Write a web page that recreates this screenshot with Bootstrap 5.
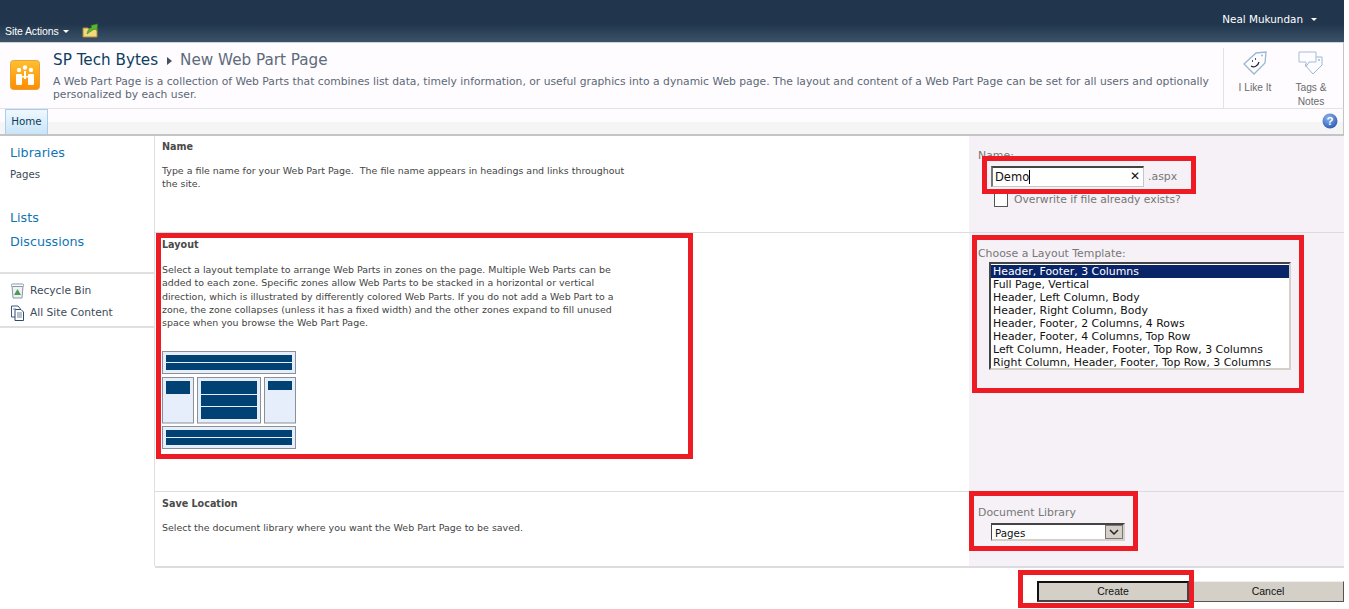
<!DOCTYPE html>
<html lang="en"><head><meta charset="utf-8"><title>New Web Part Page</title>
<link href="https://cdn.jsdelivr.net/npm/bootstrap@5.3.0/dist/css/bootstrap.min.css" rel="stylesheet">
<style>
html,body{height:609px;overflow:hidden}
body{font-family:"DejaVu Sans",sans-serif;font-size:9.45px;line-height:13.3px;color:#444;background:#fff;position:relative}
.sp-page{width:1344px;height:609px}
.sp-top{height:42px;background:linear-gradient(#21364d 0,#21364d 24px,#3b5269 100%);color:#fff;padding:0 27px 0 5px}
.sp-top .site{font-family:"Liberation Sans",sans-serif;font-size:10.5px;letter-spacing:-.1px;margin-top:24px;line-height:14px}
.sp-top .user{font-size:10.4px;margin-top:12px;line-height:14px}
.caret-d{display:inline-block;border:3px solid transparent;border-top-color:#fff;border-bottom:0;vertical-align:2px;margin-left:4px}
.sp-title{height:67px;border-top:1px solid #cfd3d8;border-bottom:1px solid #e4e2e6;background:#fefcff;border-right:1px solid #c4c4c4}
.sp-logo{margin:17px 13px 0 10px;width:30px;height:30px;flex:none}
.sp-head{padding-top:8px;flex:1;min-width:0}
.sp-crumb{font-size:15.2px;line-height:19px;color:#5d6b7a;white-space:nowrap}
.sp-crumb b{font-weight:400;color:#0d3e5f}
.sp-crumb i{display:inline-block;border:4px solid transparent;border-left:5px solid #44525f;border-right:0;margin:0 8px 0 9px;vertical-align:0}
.sp-desc{color:#5c6875;font-size:10.76px;line-height:13px;margin-top:5px;width:1165px}
.sp-social{width:120px;border-left:1px solid #e1e1e6;margin:5px 0 0;flex:none;color:#6a6a6a;font-size:10.2px;line-height:14px;text-align:center;font-family:"Liberation Sans",sans-serif;padding-left:8px}
.sp-social>div{width:46px}
.sp-social>div+div{margin-left:11px;width:44px}
.sp-social svg{display:block;margin:0 auto 5px}
.sp-ribbon{height:27px;background:linear-gradient(#fefcff 0,#fefcff 13px,#f5f5f5 13px);border-bottom:2px solid #c4c4c4;border-right:1px solid #c4c4c4;position:relative}
.sp-tab{margin-left:5px;width:43px;height:25px;background:linear-gradient(#f0f8fd,#c9e5f8);border:1px solid #a4cdee;border-bottom:0;color:#0d3e5f;font-size:10.3px;line-height:22px;text-align:center}
.sp-help{position:absolute;right:5px;top:4px}
.sp-main{height:430px}
.sp-left{width:155px;flex:none;border-right:1px solid #e0e0e0;padding-top:9px}
.sp-left .hd{color:#0f75b5;font-size:12.7px;line-height:15px;padding-left:10px}
.sp-left .sb{color:#3c4a58;font-size:10.2px;line-height:14px;padding-left:10px}
.sp-tools{border-top:2px solid #e0e0e0;border-bottom:2px solid #e0e0e0;margin-top:23px;padding:6px 0 7px 10px;height:56px;width:154px;color:#3c4a58;font-size:10.65px}
.sp-tools .it{height:22px;align-items:center;gap:5px}
.sec{border-bottom:1px solid #dcdce0}
.sec-l{width:814px;flex:none;padding:4px 0 0 7px}
.sec-l h6{font-family:inherit;font-size:9.6px;line-height:14px;font-weight:700;color:#4a4a4a;margin:0}
.sec-l p{margin:10px 0 0}
.sec-r{width:375px;background:#f5f1f6;padding-left:9px;color:#777;font-size:10.9px;position:relative}
.lbl{display:block;line-height:14px;margin:0}
.nm{margin-left:13px;width:153px;height:21px;background:#fff;border:1px solid #c6c6c6;border-top:2px solid #444;border-left:2px solid #777;color:#111;font-size:11.5px;line-height:18px;padding-left:2px;position:relative}
.cur{display:inline-block;width:1px;height:14px;background:#000;vertical-align:-3px}
.xx{position:absolute;right:3px;top:-1px;font-size:12px}
.chk{width:14px;height:14px;border:1px solid #555;background:#fff;margin:0;flex:none;border-radius:0;display:block}
.ovr{font-size:10.75px}
.tpl{margin:1px 0 0 11px;width:302px;height:108px;background:#fff;border:2px solid;border-color:#444 #d4d0c8 #d4d0c8 #444;color:#111;font-size:10.9px;line-height:13px;padding-top:1px}
.tpl div{padding-left:2px;height:13px;white-space:nowrap;line-height:13px}
.tpl .sel{background:#0a246a;color:#fff;height:13px}
.doc{margin:3px 0 0 13px;width:134px;height:18px;background:#fff;border:1px solid;border-color:#444 #d4d0c8 #d4d0c8 #444;color:#111;font-size:10.3px;line-height:16px;padding-left:3px;position:relative;border-width:2px 2px 2px 1px}
.arrow{position:absolute;right:0;top:0;width:18px;height:14px;background:#d4d0c8;border:1px solid #777;display:flex;align-items:center;justify-content:center}
.sp-btns{border-top:2px solid #dcdce0;margin-left:155px;height:43px;padding-top:13px;justify-content:flex-end;gap:3px}
.sp-btn{--bs-btn-padding-y:0;--bs-btn-padding-x:0;width:152px;height:21px;border-radius:0;background:#d4d0c8;border:1px solid;border-color:#eee #555 #555 #eee;color:#111;font-family:"Liberation Sans",sans-serif;font-size:10.5px;line-height:17px}
.sp-btn.on{border:2px solid #111;border-right-color:#444;border-bottom-color:#444;line-height:17px}
.red{position:absolute;border:5px solid #ed1c24;pointer-events:none}
</style></head><body>
<div class="sp-page">
 <div class="sp-top d-flex justify-content-between">
  <div class="d-flex"><div class="site">Site Actions<span class="caret-d"></span></div>
   <svg width="17" height="15" viewBox="0 0 17 15" style="margin-top:23px;margin-left:13px"><path d="M1 5h5l1 1h8v8H1z" fill="#f3d87f" stroke="#a98a3a"/><path d="M5 11C6 6 8 5 10 4.500L9 2.500 15.500 1 15 7.500 13 6C10 7 8 9 5 11z" fill="#5cb531" stroke="#3a8a1e" stroke-width=".6"/></svg></div>
  <div class="user">Neal Mukundan<span class="caret-d ms-2"></span></div>
 </div>
 <div class="sp-title d-flex">
  <svg class="sp-logo" viewBox="0 0 30 30"><defs><linearGradient id="o" x1="0" y1="0" x2="0" y2="1"><stop offset="0" stop-color="#ffc030"/><stop offset="1" stop-color="#ff8c00"/></linearGradient></defs><rect x=".5" y=".5" width="29" height="29" rx="3" fill="url(#o)" stroke="#e8a23c"/><g fill="#fff"><circle cx="9" cy="10" r="2.200"/><circle cx="15" cy="7.500" r="2.200"/><circle cx="21" cy="10" r="2.200"/><rect x="6" y="14" width="6" height="11" rx="1"/><rect x="18" y="14" width="6" height="11" rx="1"/><rect x="14" y="11" width="2" height="8"/><rect x="12" y="16" width="6" height="1.500"/></g></svg>
  <div class="sp-head">
   <div class="sp-crumb"><b>SP Tech Bytes</b><i></i>New Web Part Page</div>
   <div class="sp-desc">A Web Part Page is a collection of Web Parts that combines list data, timely information, or useful graphics into a dynamic Web page. The layout and content of a Web Part Page can be set for all users and optionally personalized by each user.</div>
  </div>
  <div class="sp-social d-flex">
   <div><svg width="26" height="26" viewBox="0 0 26 26" style="margin-top:2px"><path d="M2 14 14 3l10-1-1 11-11 11z" fill="#fdfdff" stroke="#9db6d2" stroke-width="1.300"/><circle cx="20" cy="5.500" r="1" fill="#9db6d2"/><path d="M9 16c3 2 7 0 8-4" fill="none" stroke="#223" stroke-width="1.200"/><path d="M10 11h1M13 9h1" stroke="#223" stroke-width="1.400"/></svg>I Like It</div>
   <div><svg width="26" height="26" viewBox="0 0 26 26" style="margin-top:2px"><path d="M7 15 16 7h8v8l-9 9z" fill="#fdfdff" stroke="#9db6d2"/><circle cx="21" cy="10" r="1" fill="#9db6d2"/><path d="M1 2h17v10H11l-3 5v-5H1z" fill="#fdfdff" stroke="#a9bcd2"/></svg>Tags &amp; Notes</div>
  </div>
 </div>
 <div class="sp-ribbon">
  <div class="sp-tab">Home</div>
  <svg class="sp-help" width="16" height="16" viewBox="0 0 16 16"><defs><radialGradient id="q" cx=".4" cy=".3" r=".8"><stop offset="0" stop-color="#8cb4ea"/><stop offset="1" stop-color="#2255b4"/></radialGradient></defs><circle cx="8" cy="8" r="7.500" fill="url(#q)"/><text x="8" y="12" text-anchor="middle" font-family="Liberation Sans" font-weight="700" font-size="11.500" fill="#fff">?</text></svg>
 </div>
 <div class="sp-main d-flex">
  <div class="sp-left">
   <div class="hd">Libraries</div>
   <div class="sb" style="margin-top:8px">Pages</div>
   <div class="hd" style="margin-top:28px">Lists</div>
   <div class="hd" style="margin-top:9px">Discussions</div>
   <div class="sp-tools">
    <div class="it d-flex"><svg width="15" height="16" viewBox="0 0 15 16"><path d="M2 3h11l-1 12H3z" fill="#eef2f7" stroke="#8a97a8"/><rect x="1.500" y="1" width="12" height="2.500" rx="1" fill="#fff" stroke="#8a97a8"/><path d="M7.500 6 11 12H4z" fill="#4f9a54"/></svg><span>Recycle Bin</span></div>
    <div class="it d-flex"><svg width="15" height="16" viewBox="0 0 15 16"><path d="M1.500 1H8l2.500 3v8h-9z" fill="#fff" stroke="#41597a"/><path d="M5 4.500h6l2.500 2.500v8.500H5z" fill="#fff" stroke="#2e4a70"/><path d="M3 4h3M7 8h5M7 10h5M7 12h5" stroke="#6b82a0"/></svg><span>All Site Content</span></div>
   </div>
  </div>
  <div class="flex-grow-1 d-flex flex-column">
   <div class="sec d-flex" style="height:97px">
    <div class="sec-l"><h6>Name</h6><p>Type a file name for your Web Part Page.&nbsp; The file name appears in headings and links throughout<br>the site.</p></div>
    <div class="sec-r" style="padding-top:13px">
     <label class="lbl">Name:</label>
     <div class="d-flex align-items-center" style="height:21px;margin-top:3px"><div class="nm">Demo<span class="cur"></span><span class="xx">✕</span></div><span class="ms-1">.aspx</span></div>
     <div class="d-flex align-items-center" style="margin:6px 0 0 16px;gap:6px"><span class="chk"></span><span class="ovr">Overwrite if file already exists?</span></div>
    </div>
   </div>
   <div class="sec d-flex" style="height:259px">
    <div class="sec-l"><h6 style="margin-top:1px">Layout</h6>
     <p style="margin-top:11px;width:460px">Select a layout template to arrange Web Parts in zones on the page. Multiple Web Parts can be added to each zone. Specific zones allow Web Parts to be stacked in a horizontal or vertical direction, which is illustrated by differently colored Web Parts. If you do not add a Web Part to a zone, the zone collapses (unless it has a fixed width) and the other zones expand to fill unused space when you browse the Web Part Page.</p>
     <svg width="135" height="98" viewBox="0 0 135 98" class="d-block" style="margin-top:22px">
      <g fill="#e6edfb" stroke="#8b8f98"><rect x=".5" y=".5" width="133" height="22"/><rect x=".5" y="26.500" width="31" height="45.500"/><rect x="35.500" y="26.500" width="63" height="45.500"/><rect x="102.500" y="26.500" width="31" height="45.500"/><rect x=".5" y="75.500" width="133" height="22"/></g>
      <g fill="#004274"><rect x="4" y="4" width="126" height="7"/><rect x="4" y="12" width="126" height="7"/><rect x="4" y="30" width="24" height="13"/><rect x="39" y="30" width="56" height="13"/><rect x="39" y="44" width="56" height="11"/><rect x="39" y="56" width="56" height="12"/><rect x="106" y="30" width="24" height="9"/><rect x="4" y="79" width="126" height="7"/><rect x="4" y="87" width="126" height="7"/></g>
     </svg>
    </div>
    <div class="sec-r" style="padding-top:14px"><label class="lbl">Choose a Layout Template:</label>
     <div class="tpl"><div class="sel">Header, Footer, 3 Columns</div><div>Full Page, Vertical</div><div>Header, Left Column, Body</div><div>Header, Right Column, Body</div><div>Header, Footer, 2 Columns, 4 Rows</div><div>Header, Footer, 4 Columns, Top Row</div><div>Left Column, Header, Footer, Top Row, 3 Columns</div><div>Right Column, Header, Footer, Top Row, 3 Columns</div></div>
    </div>
   </div>
   <div class="d-flex" style="height:74px">
    <div class="sec-l" style="padding-top:5px"><h6>Save Location</h6><p style="margin-top:10px">Select the document library where you want the Web Part Page to be saved.</p></div>
    <div class="sec-r" style="padding-top:14px"><label class="lbl">Document Library</label>
     <div class="doc">Pages<span class="arrow"><svg width="10" height="7" viewBox="0 0 10 7"><path d="M1 1l4 4 4-4" fill="none" stroke="#222" stroke-width="1.500"/></svg></span></div>
    </div>
   </div>
  </div>
 </div>
 <div class="sp-btns d-flex"><button type="button" class="btn sp-btn on">Create</button><button type="button" class="btn sp-btn">Cancel</button></div>
</div>
<div class="red" style="left:982px;top:156px;width:214px;height:38px"></div>
<div class="red" style="left:156px;top:233px;width:537px;height:226px"></div>
<div class="red" style="left:972px;top:235px;width:332px;height:158px"></div>
<div class="red" style="left:969px;top:491px;width:169px;height:60px"></div>
<div class="red" style="left:1018px;top:570px;width:176px;height:38px"></div>
</body></html>
